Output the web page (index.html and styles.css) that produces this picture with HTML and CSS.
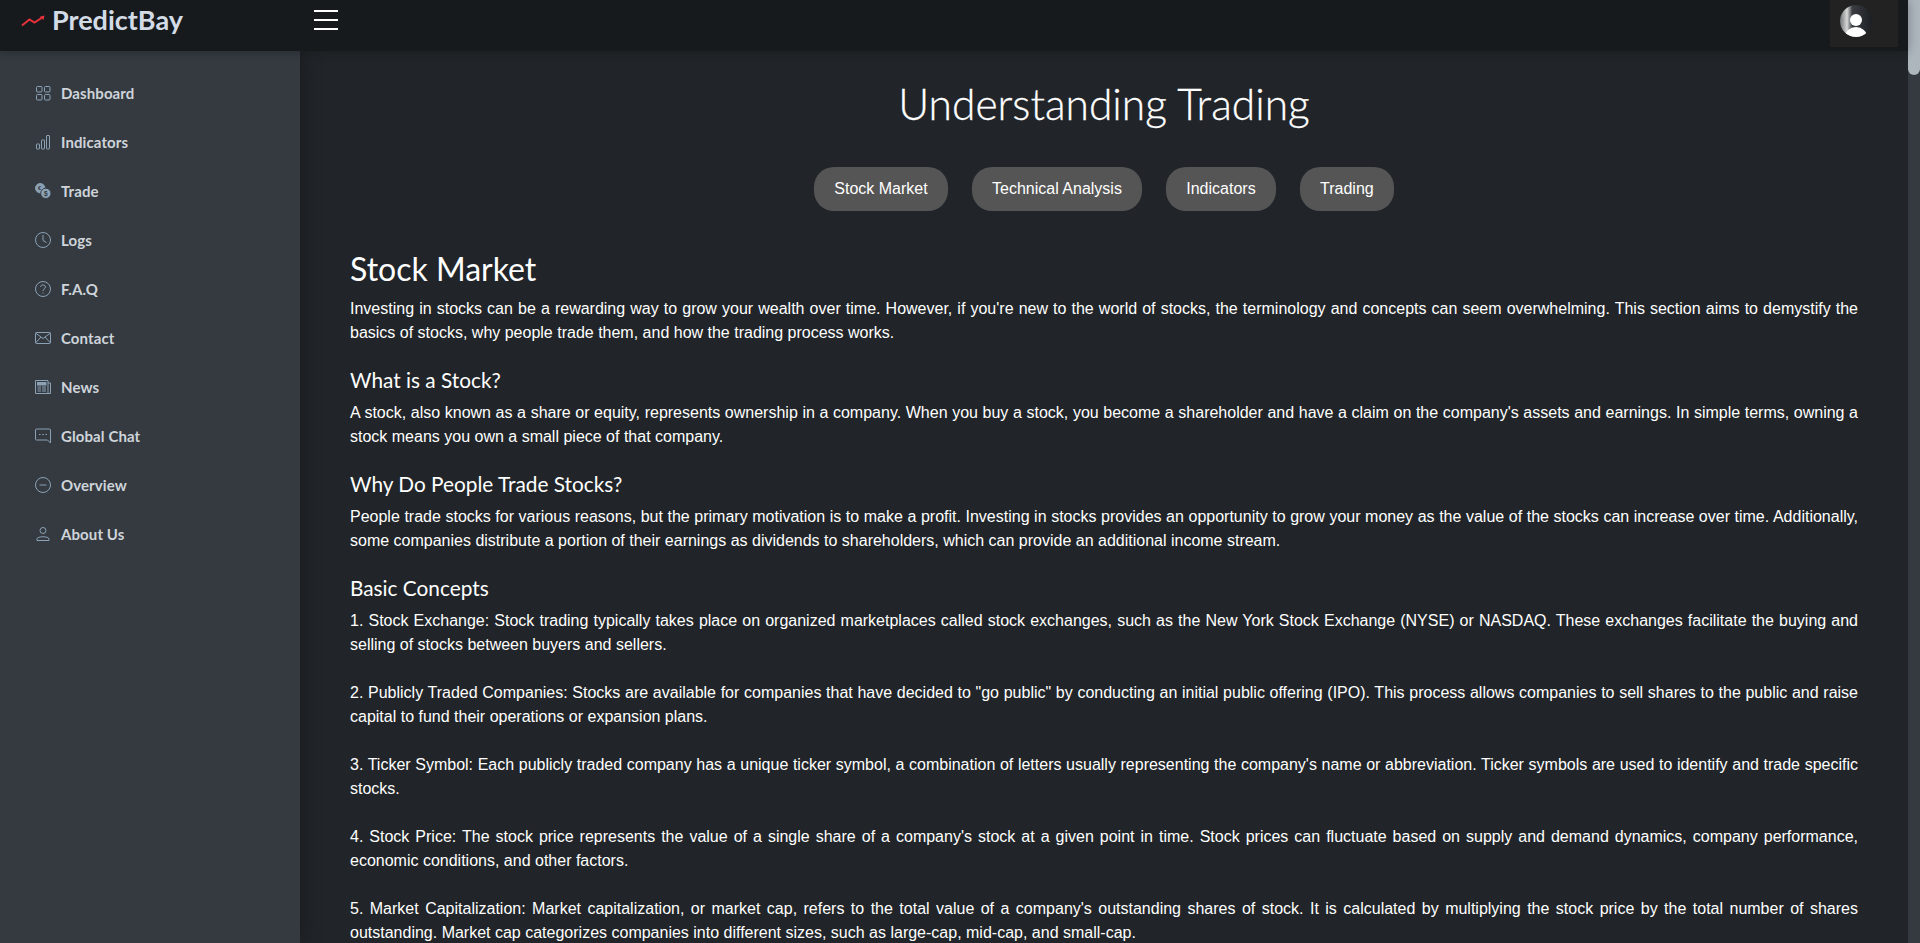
FILE: index.html
```html
<!DOCTYPE html>
<html lang="en">
<head>
<meta charset="utf-8">
<title>PredictBay</title>
<link rel="stylesheet" href="styles.css">
</head>
<body>
<div class="app">
  <header class="navbar">
    <a class="brand">
      <svg class="brand-icon" viewBox="0 0 24 12" width="24" height="12"><path d="M1 10.500 L8.500 4.500 L13.500 7.500 L20.500 3" fill="none" stroke="#e8323c" stroke-width="2"/><path d="M18.500 1.800 L23.500 .5 L22.500 5 Z" fill="#e8323c"/></svg>
      <span class="brand-name">PredictBay</span>
    </a>
    <button class="burger" aria-label="menu"><i></i><i></i><i></i></button>
    <div class="avatar-box"><svg viewBox="0 0 32 32" width="32" height="32"><defs><linearGradient id="av" x1="0" x2="1" y1="0" y2="0"><stop offset="0" stop-color="#6f7275"/><stop offset=".22" stop-color="#d8d8d8"/><stop offset=".38" stop-color="#3a3e42"/><stop offset="1" stop-color="#1c2024"/></linearGradient><clipPath id="avc"><circle cx="16" cy="16" r="16"/></clipPath></defs><circle cx="16" cy="16" r="16" fill="url(#av)"/><g clip-path="url(#avc)"><circle cx="16" cy="15" r="6" fill="#fff"/><ellipse cx="16" cy="32" rx="11" ry="10" fill="#fff"/></g></svg></div>
  </header>
  <nav class="sidebar">
    <a class="item"><svg viewBox="0 0 16 16"><rect x="1.500" y="1.500" width="5.500" height="5.500" rx="1"/><rect x="9.500" y="1.500" width="5.500" height="5.500" rx="1"/><rect x="1.500" y="9.500" width="5.500" height="5.500" rx="1"/><rect x="9.500" y="9.500" width="5.500" height="5.500" rx="1"/></svg><span>Dashboard</span></a>
    <a class="item"><svg viewBox="0 0 16 16"><rect x="1.500" y="10" width="3" height="5" rx=".5"/><rect x="6.500" y="6" width="3" height="9" rx=".5"/><rect x="11.500" y="1.500" width="3" height="13.500" rx=".5"/></svg><span>Indicators</span></a>
    <a class="item"><svg viewBox="0 0 17 17"><circle cx="5.500" cy="5.500" r="5" class="fill"/><circle cx="11.500" cy="11" r="5.500" class="fill halo"/><text x="11.500" y="14" class="coin">$</text><text x="5" y="7.500" class="coin small">€</text></svg><span>Trade</span></a>
    <a class="item"><svg viewBox="0 0 16 16"><circle cx="8" cy="8" r="7.500"/><path d="M8 3v5.500l3.500 2"/></svg><span>Logs</span></a>
    <a class="item"><svg viewBox="0 0 16 16"><circle cx="8" cy="8" r="7.500"/><path d="M5.600 6C5.600 3.200 10.400 3.200 10.400 6c0 2-2.400 1.900-2.400 4"/><path d="M8 11.500v1"/></svg><span>F.A.Q</span></a>
    <a class="item"><svg viewBox="0 0 16 12"><rect x=".5" y=".5" width="15" height="11" rx="1"/><path d="M.5 1 8 6.500 15.500 1M.5 11 6 5M15.500 11 10 5"/></svg><span>Contact</span></a>
    <a class="item"><svg viewBox="0 0 16 14"><path d="M.5.5h12.500v13H.5zM13 3h2.500v10.500H13"/><rect x="2.500" y="2.500" width="8.500" height="2.500" class="fill"/><path d="M2.500 7h3.500M2.500 9h3.500M2.500 11h3.500M7 7h4M7 9h4M7 11h4"/></svg><span>News</span></a>
    <a class="item"><svg viewBox="0 0 16 15"><path d="M1.500.5h13a1 1 0 0 1 1 1v13l-3-3H1.500a1 1 0 0 1-1-1v-9a1 1 0 0 1 1-1z"/><path d="M4 6h1.500M7.300 6h1.500M10.500 6H12"/></svg><span>Global Chat</span></a>
    <a class="item"><svg viewBox="0 0 16 16"><circle cx="8" cy="8" r="7.500"/><path d="M4.500 8h7"/></svg><span>Overview</span></a>
    <a class="item"><svg viewBox="0 0 16 16"><circle cx="8" cy="4.500" r="3"/><path d="M2 14.500v-1.500c0-3 12-3 12 0v1.500z"/></svg><span>About Us</span></a>
  </nav>
  <main class="content">
    <h1>Understanding Trading</h1>
    <div class="tabs">
      <a class="tab">Stock Market</a>
      <a class="tab">Technical Analysis</a>
      <a class="tab">Indicators</a>
      <a class="tab">Trading</a>
    </div>
    <h2>Stock Market</h2>
    <p>Investing in stocks can be a rewarding way to grow your wealth over time. However, if you're new to the world of stocks, the terminology and concepts can seem overwhelming. This section aims to demystify the basics of stocks, why people trade them, and how the trading process works.</p>
    <h3>What is a Stock?</h3>
    <p>A stock, also known as a share or equity, represents ownership in a company. When you buy a stock, you become a shareholder and have a claim on the company's assets and earnings. In simple terms, owning a stock means you own a small piece of that company.</p>
    <h3>Why Do People Trade Stocks?</h3>
    <p>People trade stocks for various reasons, but the primary motivation is to make a profit. Investing in stocks provides an opportunity to grow your money as the value of the stocks can increase over time. Additionally, some companies distribute a portion of their earnings as dividends to shareholders, which can provide an additional income stream.</p>
    <h3>Basic Concepts</h3>
    <p>1. Stock Exchange: Stock trading typically takes place on organized marketplaces called stock exchanges, such as the New York Stock Exchange (NYSE) or NASDAQ. These exchanges facilitate the buying and selling of stocks between buyers and sellers.<br><br>2. Publicly Traded Companies: Stocks are available for companies that have decided to "go public" by conducting an initial public offering (IPO). This process allows companies to sell shares to the public and raise capital to fund their operations or expansion plans.<br><br>3. Ticker Symbol: Each publicly traded company has a unique ticker symbol, a combination of letters usually representing the company's name or abbreviation. Ticker symbols are used to identify and trade specific stocks.<br><br>4. Stock Price: The stock price represents the value of a single share of a company's stock at a given point in time. Stock prices can fluctuate based on supply and demand dynamics, company performance, economic conditions, and other factors.<br><br>5. Market Capitalization: Market capitalization, or market cap, refers to the total value of a company's outstanding shares of stock. It is calculated by multiplying the stock price by the total number of shares outstanding. Market cap categorizes companies into different sizes, such as large-cap, mid-cap, and small-cap.</p>
  </main>
  <div class="scrollbar"><div class="thumb"></div></div>
</div>
</body>
</html>
```

FILE: styles.css
```css
* { box-sizing: border-box; }
html, body { margin: 0; height: 100%; overflow: hidden; }
body { background: #212529; color: #fff; font-family: "Liberation Sans", Arial, sans-serif; }
.app {
  display: grid;
  grid-template-columns: 300px 1fr 12px;
  grid-template-rows: 51px 892px;
  height: 943px;
  overflow: hidden;
  position: relative;
}
.navbar {
  grid-column: 1 / 3;
  grid-row: 1;
  background: #171a1d;
  display: flex;
  align-items: flex-start;
  position: relative;
  z-index: 2;
  box-shadow: 0 0 10px rgba(0,0,0,.3);
}
.brand {
  width: 300px;
  display: flex;
  align-items: center;
  gap: 7px;
  padding: 5px 0 0 21px;
  height: 37px;
  color: #d3dce6;
  font: 700 27px/32px Lato, "Noto Sans", sans-serif;
}
.brand-icon { flex: none; }
.brand-name { margin-top: -2px; }
.burger {
  margin: 10px 0 0 14px;
  width: 24px;
  height: 20px;
  padding: 0;
  border: 0;
  background: none;
  display: flex;
  flex-direction: column;
  justify-content: space-between;
}
.burger i { display: block; height: 2px; background: #fff; }
.avatar-box {
  margin-left: auto;
  margin-right: 10px;
  width: 68px;
  height: 47px;
  background: #222;
  padding: 5px 10px;
}
.sidebar {
  grid-column: 1;
  grid-row: 2;
  background: #343a40;
  padding: 17px 0 0 35px;
  display: flex;
  flex-direction: column;
  box-shadow: 0 0 20px rgba(0,0,0,.35);
  z-index: 1;
}
.item {
  height: 49px;
  display: flex;
  align-items: center;
  gap: 10px;
  color: #ced4da;
  font: 700 15px/20px Lato, "Noto Sans", sans-serif;
  letter-spacing: .1px;
}
.item svg {
  width: 16px;
  height: 16px;
  flex: none;
  fill: none;
  stroke: #8ba1b5;
  stroke-width: 1;
}
.item svg .fill { fill: #8ba1b5; }
.item svg .halo { stroke: #343a40; }
.item svg .coin { fill: #343a40; stroke: none; font: 700 7px "Liberation Sans", sans-serif; text-anchor: middle; }
.item svg .coin.small { font-size: 6px; }
.content {
  grid-column: 2;
  grid-row: 2;
  padding: 29px 50px 0 50px;
  min-width: 0;
  overflow: hidden;
}
h1 {
  margin: 0 0 39px;
  text-align: center;
  font: 300 42.500px/48px Lato, "Noto Sans", sans-serif;
  -webkit-text-stroke: .3px #fff;
}
.tabs {
  display: flex;
  justify-content: center;
  gap: 24px;
  margin-bottom: 39px;
}
.tab {
  height: 44px;
  padding: 0 20.200px;
  border-radius: 20px;
  background: #555;
  font-size: 16px;
  line-height: 44px;
}
h2 {
  margin: 0 0 9px;
  font: 400 32px/38px Lato, "Noto Sans", sans-serif;
}
h3 {
  margin: 21px 0 7px;
  font: 400 20.800px/28px Lato, "Noto Sans", sans-serif;
}
p {
  margin: 0 0 16px;
  font-size: 16px;
  line-height: 24px;
  text-align: justify;
}
.scrollbar {
  grid-column: 3;
  grid-row: 1 / 3;
  background: #343a40;
}
.thumb {
  width: 100%;
  height: 75px;
  background: #adb5bd;
  border-radius: 0 0 6px 6px;
}
```
